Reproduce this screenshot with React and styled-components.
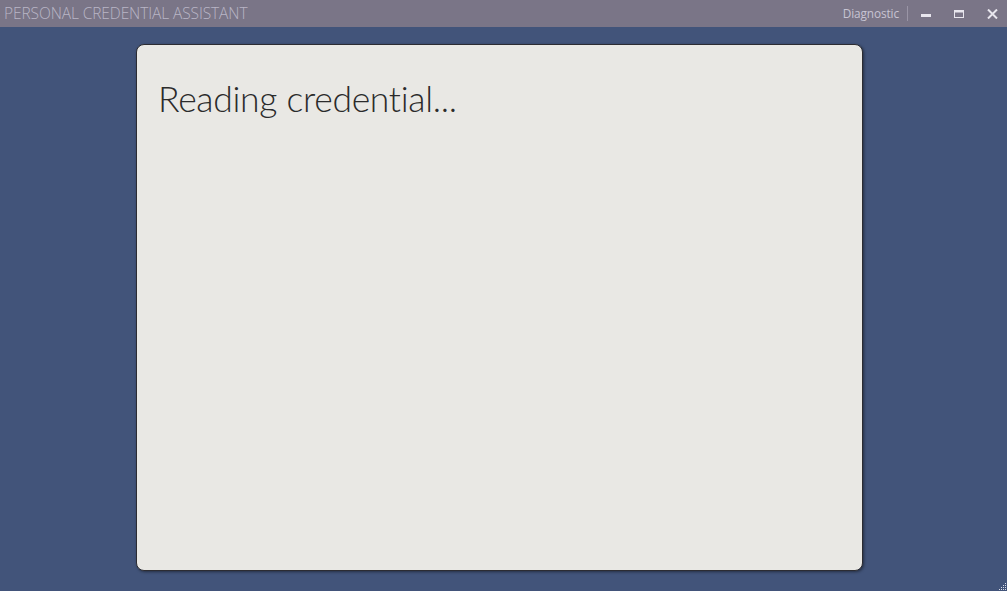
import React from 'react';
import styled, { createGlobalStyle } from 'styled-components';

const GlobalStyle = createGlobalStyle`
  html, body {
    margin: 0;
    padding: 0;
    height: 100%;
  }
  body {
    background: #42547a;
    font-family: "Open Sans", "Liberation Sans", sans-serif;
    overflow: hidden;
  }
  #root {
    height: 100%;
  }
`;

const Window = styled.div`
  width: 1007px;
  height: 591px;
  display: flex;
  flex-direction: column;
  background: #42547a;
  position: relative;
`;

const TitleBar = styled.header`
  height: 27px;
  flex: none;
  display: flex;
  align-items: center;
  background: #7a7587;
  padding: 0 9px 0 4px;
`;

const Title = styled.div`
  flex: 1;
  color: #b9b5c6;
  font-family: "Open Sans", sans-serif;
  font-weight: 300;
  font-size: 15.5px;
  letter-spacing: -0.1px;
  line-height: 27px;
`;

const DiagnosticLink = styled.span`
  color: #c8c4d3;
  font-family: "Open Sans", sans-serif;
  font-size: 11.8px;
  letter-spacing: -0.1px;
  padding-right: 8px;
  border-right: 1px solid #9a95a6;
  line-height: 15px;
  margin-top: -1px;
`;

const Controls = styled.div`
  display: flex;
  align-items: center;
  gap: 23px;
  padding-left: 13px;
  height: 100%;
`;

const ControlButton = styled.div`
  display: flex;
  align-items: center;
  color: #e8e6ee;
  height: 27px;
`;

const Main = styled.main`
  flex: 1;
  display: flex;
  padding: 17px 144px 20px 136px;
`;

const Card = styled.section`
  flex: 1;
  background: #e9e8e4;
  border: 1px solid #2c2c32;
  border-radius: 8px;
  box-shadow: 1px 1px 3px rgba(0, 0, 0, 0.45);
  padding: 31px 21px;
`;

const Heading = styled.h1`
  margin: 0;
  font-family: Lato, "Liberation Sans", sans-serif;
  font-weight: 300;
  font-size: 35.5px;
  line-height: 46px;
  color: #2b2b2b;
  letter-spacing: -0.3px;
`;

const Grip = styled.svg`
  position: absolute;
  right: 0;
  bottom: 0;
`;

const Minimize = () => (
  <svg width="10" height="10" viewBox="0 0 10 10">
    <rect x="0" y="5" width="10" height="3" fill="currentColor" />
  </svg>
);

const Maximize = () => (
  <svg width="10" height="8" viewBox="0 0 10 8">
    <rect x="0.5" y="0.5" width="9" height="7" fill="none" stroke="currentColor" strokeWidth="1" />
    <rect x="0" y="0" width="10" height="2.5" fill="currentColor" />
  </svg>
);

const Close = () => (
  <svg width="11" height="10" viewBox="0 0 11 10">
    <path d="M1 0.5 L10 9.5 M10 0.5 L1 9.5" stroke="currentColor" strokeWidth="2" />
  </svg>
);

export default function App() {
  const dots = [];
  for (let r = 0; r < 4; r++) {
    for (let c = 0; c < 4; c++) {
      if (c + r >= 3) dots.push(<rect key={`${r}-${c}`} x={c * 2 + 1} y={r * 2 + 1} width="1" height="1" fill="#d8dce8" />);
    }
  }
  return (
    <>
      <GlobalStyle />
      <Window>
        <TitleBar>
          <Title>PERSONAL CREDENTIAL ASSISTANT</Title>
          <DiagnosticLink>Diagnostic</DiagnosticLink>
          <Controls>
            <ControlButton><Minimize /></ControlButton>
            <ControlButton><Maximize /></ControlButton>
            <ControlButton><Close /></ControlButton>
          </Controls>
        </TitleBar>
        <Main>
          <Card>
            <Heading>Reading credential...</Heading>
          </Card>
        </Main>
        <Grip width="9" height="9" viewBox="0 0 9 9">{dots}</Grip>
      </Window>
    </>
  );
}
